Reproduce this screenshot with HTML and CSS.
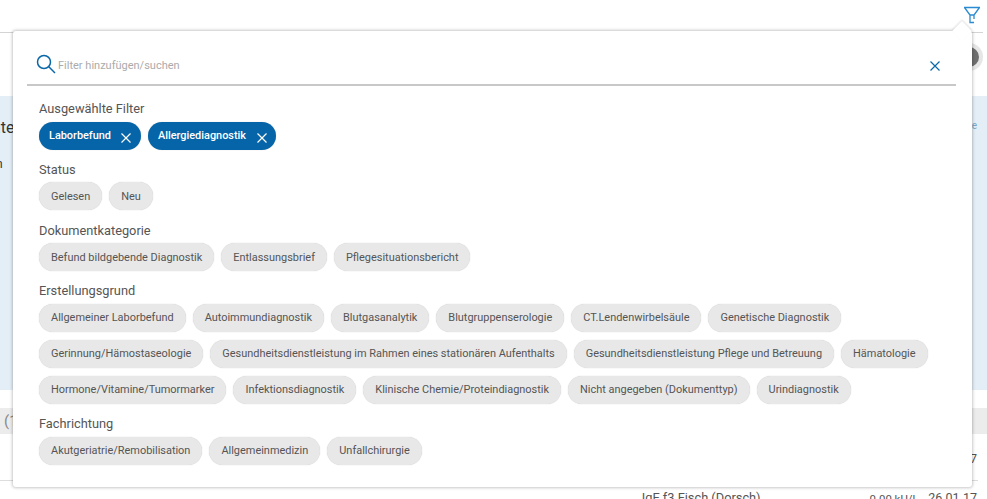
FILE: index.html
```html
<!DOCTYPE html>
<html lang="de">
<head>
<meta charset="utf-8">
<title>Filter</title>
<link rel="stylesheet" href="styles.css">
</head>
<body>
<div class="page">
  <header class="topbar">
    <svg class="filter-icon" width="18" height="18" viewBox="0 0 18 18" fill="none" stroke="#2a8bd0" stroke-width="1.300"><path d="M1 1.500h16M1.500 1.500l5.500 7.500v7.500h4M16.500 1.500L11 9v4M7 9h4"/></svg>
  </header>
  <div class="subbar"><span class="avatar"></span></div>
  <section class="band"><span class="band-text">ate</span><span class="band-small">n</span><span class="band-right">e</span></section>
  <div class="gap"></div>
  <div class="group-row"><span>n (1</span></div>
  <div class="row row-date"><span class="date">7</span></div>
  <div class="row row-last"><span class="name">IgE f3 Fisch (Dorsch)</span><span class="value">0.00 kU/l</span><span class="date">26.01.17</span></div>

  <div class="popover">
    <span class="arrow"></span>
    <div class="search">
      <svg class="search-icon" width="20" height="20" viewBox="0 0 20 20" fill="none" stroke="#0a68a8" stroke-width="1.500"><circle cx="8" cy="8" r="6.500"/><path d="M12.800 12.800L19 19"/></svg>
      <span class="placeholder">Filter hinzufügen/suchen</span>
      <svg class="clear-icon" width="10" height="10" viewBox="0 0 10 10" fill="none" stroke="#0a68a8" stroke-width="1.200"><path d="M.5.5l9 9M9.500.5l-9 9"/></svg>
    </div>
    <div class="group">
      <h3>Ausgewählte Filter</h3>
      <div class="chips">
        <span class="chip chip-on">Laborbefund<svg width="10" height="10" viewBox="0 0 10 10" fill="none" stroke="#fff" stroke-width="1.200"><path d="M.5.5l9 9M9.500.5l-9 9"/></svg></span>
        <span class="chip chip-on">Allergiediagnostik<svg width="10" height="10" viewBox="0 0 10 10" fill="none" stroke="#fff" stroke-width="1.200"><path d="M.5.5l9 9M9.500.5l-9 9"/></svg></span>
      </div>
    </div>
    <div class="group">
      <h3>Status</h3>
      <div class="chips"><span class="chip">Gelesen</span><span class="chip">Neu</span></div>
    </div>
    <div class="group">
      <h3>Dokumentkategorie</h3>
      <div class="chips"><span class="chip">Befund bildgebende Diagnostik</span><span class="chip">Entlassungsbrief</span><span class="chip">Pflegesituationsbericht</span></div>
    </div>
    <div class="group">
      <h3>Erstellungsgrund</h3>
      <div class="chips">
        <span class="chip">Allgemeiner Laborbefund</span><span class="chip">Autoimmundiagnostik</span><span class="chip">Blutgasanalytik</span><span class="chip">Blutgruppenserologie</span><span class="chip">CT.Lendenwirbelsäule</span><span class="chip">Genetische Diagnostik</span>
        <span class="chip">Gerinnung/Hämostaseologie</span><span class="chip">Gesundheitsdienstleistung im Rahmen eines stationären Aufenthalts</span><span class="chip">Gesundheitsdienstleistung Pflege und Betreuung</span><span class="chip">Hämatologie</span>
        <span class="chip">Hormone/Vitamine/Tumormarker</span><span class="chip">Infektionsdiagnostik</span><span class="chip">Klinische Chemie/Proteindiagnostik</span><span class="chip">Nicht angegeben (Dokumenttyp)</span><span class="chip">Urindiagnostik</span>
      </div>
    </div>
    <div class="group">
      <h3>Fachrichtung</h3>
      <div class="chips"><span class="chip">Akutgeriatrie/Remobilisation</span><span class="chip">Allgemeinmedizin</span><span class="chip">Unfallchirurgie</span></div>
    </div>
  </div>
</div>
</body>
</html>
```
FILE: styles.css
```css
* { box-sizing: border-box; }
html, body { margin: 0; height: 100%; }
body { font-family: Roboto, "Liberation Sans", sans-serif; color: #444; background: #fff; overflow: hidden; }
.page { position: relative; width: 987px; height: 499px; overflow: hidden; }
.topbar { height: 33px; border-bottom: 1px solid #d4d4d4; display: flex; justify-content: flex-end; padding: 6px 2px 0 0; margin-right: 4px; }
.filter-icon { display: block; }
.subbar { height: 63px; display: flex; justify-content: flex-end; padding: 14px 8px 0 0; }
.avatar { width: 20px; height: 20px; border-radius: 50%; background: #6f6f6f; box-shadow: 0 0 0 4px #e6e6e6; }
.band { position: relative; height: 294px; background: #e3eef6; font-size: 16px; color: #333; }
.band-text { display: block; padding-top: 22px; margin-left: -8px; }
.band-small { display: block; padding-top: 20px; margin-left: -4px; font-size: 12px; }
.band-right { position: absolute; right: 10px; top: 24px; font-size: 10px; color: #7aa6c4; }
.gap { height: 18px; }
.group-row { height: 26px; background: #ececec; color: #888; font-size: 15px; padding: 4px 0 0 0; text-indent: -8px; }
.row { display: flex; justify-content: flex-end; font-size: 12.500px; color: #555; }
.row-date { height: 47px; padding: 17px 0 0 0; margin-right: 9px; border-bottom: 1px solid #ddd; }
.row-date .date { margin-right: 1px; }
.row-last { height: 20px; padding-right: 10px; align-items: flex-start; padding-top: 9px; }
.name { margin-right: 109px; font-size: 12.800px; }
.value { font-size: 11.400px; margin-right: 13px; padding-top: 2px; }
.popover { position: absolute; left: 13px; top: 31px; width: 959px; height: 456px; background: #fff; border-radius: 3px; box-shadow: 0 0 3px 1px rgba(0,0,0,.22); padding: 0 16px 0 14px; }
.arrow { position: absolute; right: 3px; top: -7px; width: 14px; height: 14px; background: #fff; transform: rotate(45deg); box-shadow: -1px -1px 2px rgba(0,0,0,.12); }
.search { position: relative; height: 55px; border-bottom: 2px solid #c8c8c8; display: flex; align-items: center; padding: 16px 0 0 9px; margin-bottom: 15px; }
.search-icon { flex: none; margin-top: -3px; }
.placeholder { flex: 1; font-size: 11px; color: #ababab; margin-left: 2px; }
.clear-icon { flex: none; margin-right: 16px; }
.group { padding-left: 12px; }
h3 { margin: 0; font-size: 12.800px; line-height: 16px; font-weight: 400; color: #555; height: 16px; margin-bottom: 4.600px; }
.chips { display: flex; flex-wrap: wrap; gap: 8px 7px; margin-bottom: 12.200px; }
.chip { display: inline-flex; align-items: center; height: 28px; padding: 0 12px; border-radius: 14px; background: #e8e8e8; box-shadow: 0 0 1px rgba(0,0,0,.25); font-size: 10.940px; color: #555; white-space: nowrap; }
.chip-on { background: #0565a8; color: #fff; font-weight: 500; font-size: 10.900px; padding: 0 9.500px 0 10px; }
.chip-on svg { margin: 5px 0 0 10.500px; }
```
